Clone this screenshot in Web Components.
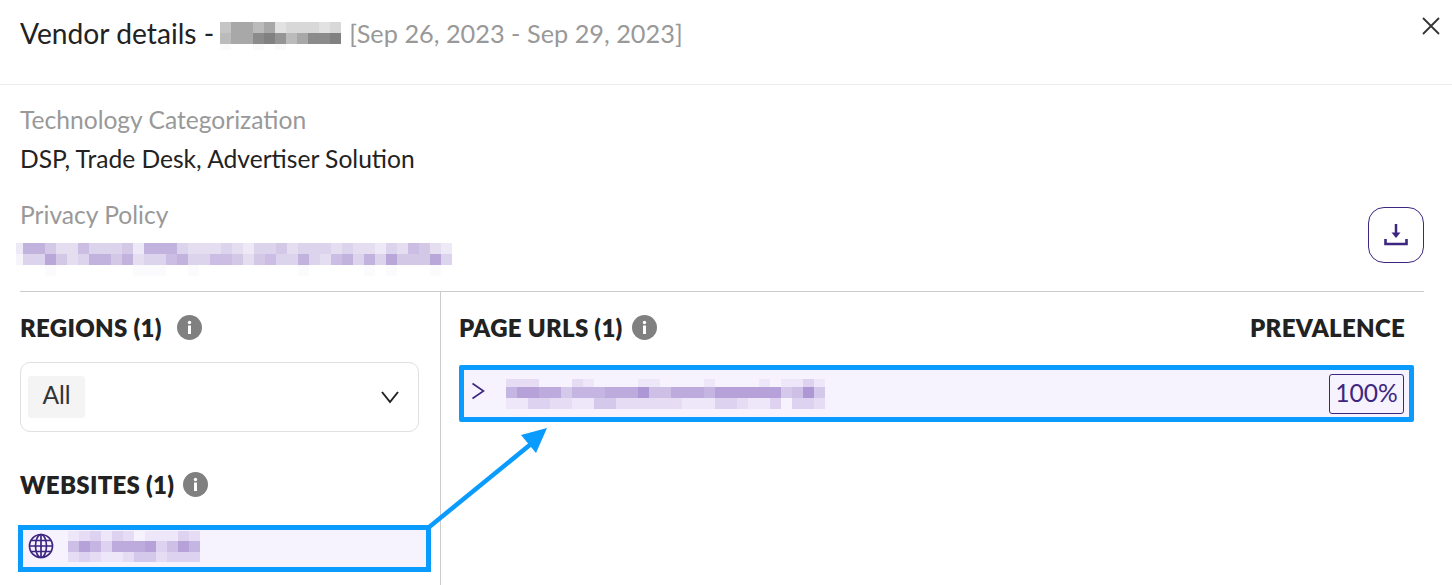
<!DOCTYPE html>
<html lang="en">
  <head>
    <meta charset="UTF-8" />
    <title>Vendor details</title>
    <style>
      body {
        margin: 0;
        background: #fff;
        color: #222;
        font-family: 'Lato', 'Liberation Sans', sans-serif;
        font-size: 24.6px;
      }
    </style>
  </head>
  <body>
    <vendor-dialog>
      <dialog-header slot="header">
        Vendor details -
        <redacted-block
          slot="name"
          color="#6e6e6e"
          heights="11,11,6"
          data="69979344434,799cdb79ccd,.00.0.00000"
        ></redacted-block>
        <span slot="dates">[Sep 26, 2023 - Sep 29, 2023]</span>
      </dialog-header>

      <vendor-summary slot="summary">
        <summary-field label="Technology Categorization">DSP, Trade Desk, Advertiser Solution</summary-field>
        <summary-field label="Privacy Policy" class="policy">
          <redacted-block
            color="#7d5ab8"
            first="6.7"
            heights="11,11,11"
            data="2775336444527774333432445344434332436532,1448534775734467446653564474367474855584,000.0000000...00.000000000.00000.0.000.0"
          ></redacted-block>
        </summary-field>
      </vendor-summary>

      <section-heading slot="left" gap="15">REGIONS (1)</section-heading>
      <region-select slot="left">All</region-select>
      <section-heading slot="left" gap="9" class="websites">WEBSITES (1)</section-heading>
      <website-row slot="left">
        <redacted-block
          color="#7d5ab8"
          heights="10,11,10"
          data="123132011132,586377783586,232112442333"
        ></redacted-block>
      </website-row>

      <section-heading slot="right" gap="9" trailing="PREVALENCE">PAGE URLS (1)</section-heading>
      <url-row slot="right" value="100%">
        <redacted-block
          color="#7d5ab8"
          heights="8,11,11"
          data="22200021000011000010000101131,68877466677795577768888884594,11332211442222221113321130332"
        ></redacted-block>
      </url-row>
    </vendor-dialog>

    <script>
      // small helper, every element below has the same constructor otherwise
      class ShadowElement extends HTMLElement {
        constructor(html) {
          super();
          this.attachShadow({ mode: 'open' }).innerHTML = html;
        }
      }

      const PURPLE = '#3d2680';

      class VendorDialog extends ShadowElement {
        constructor() {
          super(`
            <style>
              :host { display: block; position: relative; width: 1452px; height: 585px; overflow: hidden; }
              .columns { display: grid; grid-template-columns: 421px 1fr; margin-left: 20px; }
              .left { border-right: 1px solid #ccc; height: 293px; box-sizing: border-box; padding: 21px 21px 0 0; }
              .right { padding: 21px 47px 0 18px; }
              svg { position: absolute; left: 0; top: 0; pointer-events: none; }
            </style>
            <slot name="header"></slot>
            <slot name="summary"></slot>
            <div class="columns">
              <div class="left"><slot name="left"></slot></div>
              <div class="right"><slot name="right"></slot></div>
            </div>
            <svg width="1452" height="585" viewBox="0 0 1452 585">
              <path d="M428 528 L531 444" stroke="#0a9bff" stroke-width="4.5" fill="none" />
              <path d="M547 428 L521 435 L536 453 Z" fill="#0a9bff" />
            </svg>
          `);
        }
      }

      class DialogHeader extends ShadowElement {
        constructor() {
          super(`
            <style>
              :host { display: flex; height: 85px; box-sizing: border-box; border-bottom: 1px solid #ebebeb; padding: 18px 11px 0 20px; font-size: 28.2px; color: #222; }
              .title { display: flex; gap: 6px; height: 30px; line-height: 30px; flex: 1; white-space: nowrap; }
              .dates { color: #999; font-size: 25.3px; margin-left: 2px; }
              slot[name=name]::slotted(*) { margin-top: 4px; }
              svg { margin-top: -2px; }
            </style>
            <div class="title">
              <span><slot></slot></span>
              <slot name="name"></slot>
              <span class="dates"><slot name="dates"></slot></span>
            </div>
            <svg width="20" height="20" viewBox="0 0 20 20"><path d="M2 2 L18 18 M18 2 L2 18" stroke="#333" stroke-width="1.8" fill="none" /></svg>
          `);
        }
      }

      class VendorSummary extends ShadowElement {
        constructor() {
          super(`
            <style>
              :host { display: flex; justify-content: space-between; margin: 0 28px 0 20px; padding: 20px 0 15px; border-bottom: 1px solid #ccc; }
              .fields { display: flex; flex-direction: column; gap: 26px; }
              button {
                align-self: flex-end; margin-bottom: 13px; width: 56px; height: 56px; padding: 0; background: #fff;
                border: 1.5px solid ${PURPLE}; border-radius: 16px; display: flex; align-items: center; justify-content: center;
              }
            </style>
            <div class="fields"><slot></slot></div>
            <button>
              <svg width="26" height="26" viewBox="0 0 26 26">
                <path d="M13 2 V12" stroke="${PURPLE}" stroke-width="2.5" fill="none" />
                <path d="M8.5 10.5 H17.5 L13 16 Z" fill="${PURPLE}" />
                <path d="M2.5 17 V22 H23.5 V17" stroke="${PURPLE}" stroke-width="2.6" fill="none" />
              </svg>
            </button>
          `);
        }
      }

      class SummaryField extends ShadowElement {
        constructor() {
          super(`
            <style>
              :host { display: block; line-height: 30px; color: #222; }
              .label { color: #999; margin-bottom: 9px; }
              :host(.policy) .label { margin-bottom: 13px; }
              :host(.policy) .value { margin-left: -4px; }
            </style>
            <div class="label"></div>
            <div class="value"><slot></slot></div>
          `);
        }
        connectedCallback() {
          this.shadowRoot.querySelector('.label').textContent = this.getAttribute('label');
        }
      }

      // pixelated stand-in for text that was blurred out in the screenshot
      // data is one hex digit of opacity per cell, "." is barely visible
      class RedactedBlock extends ShadowElement {
        constructor() {
          super(`
            <style>
              :host { display: block; line-height: 0; filter: blur(0.5px); }
              .row { display: flex; }
              .cell { width: 11px; flex: none; }
            </style>
          `);
        }
        connectedCallback() {
          const color = this.getAttribute('color');
          const first = this.getAttribute('first');
          const heights = this.getAttribute('heights').split(',');
          this.getAttribute('data').split(',').forEach((line, i) => {
            const row = document.createElement('div');
            row.className = 'row';
            [...line].forEach((ch, j) => {
              const cell = document.createElement('div');
              cell.className = 'cell';
              if (first && j === 0) cell.style.width = first + 'px';
              cell.style.height = heights[i] + 'px';
              cell.style.background = color;
              cell.style.opacity = ch === '.' ? 0.03 : parseInt(ch, 16) / 15;
              row.appendChild(cell);
            });
            this.shadowRoot.appendChild(row);
          });
        }
      }

      class InfoDot extends ShadowElement {
        constructor() {
          super(`
            <style>:host { display: inline-flex; }</style>
            <svg width="25" height="25" viewBox="0 0 25 25">
              <circle cx="12.5" cy="12.5" r="12.5" fill="#808080" />
              <circle cx="12.5" cy="7.5" r="1.7" fill="#fff" />
              <rect x="11" y="10.5" width="3" height="8.5" fill="#fff" />
            </svg>
          `);
        }
      }

      class SectionHeading extends ShadowElement {
        constructor() {
          super(`
            <style>
              :host { display: flex; align-items: center; height: 30px; line-height: 30px; font-size: 24px; font-weight: 800; letter-spacing: 0.3px; color: #222; white-space: nowrap; }
              :host(.websites) { margin-top: 38px; }
              .trailing { margin-left: auto; margin-right: 9px; }
              info-dot { margin-top: -2px; }
            </style>
            <span><slot></slot></span>
            <info-dot></info-dot>
            <span class="trailing"></span>
          `);
        }
        connectedCallback() {
          this.shadowRoot.querySelector('info-dot').style.marginLeft = this.getAttribute('gap') + 'px';
          this.shadowRoot.querySelector('.trailing').textContent = this.getAttribute('trailing') || '';
        }
      }

      class RegionSelect extends ShadowElement {
        constructor() {
          super(`
            <style>
              :host { display: flex; align-items: center; justify-content: space-between; box-sizing: border-box; height: 70px; margin-top: 19px; padding: 0 18px 0 7px; border: 1px solid #e0e0e0; border-radius: 10px; }
              .chip { display: flex; align-items: center; justify-content: center; box-sizing: border-box; width: 57px; height: 42px; padding-bottom: 5px; background: #f4f4f4; border-radius: 3px; color: #333; }
            </style>
            <div class="chip"><slot></slot></div>
            <svg width="20" height="14" viewBox="0 0 20 14"><path d="M2 2 L10 12 L18 2" stroke="#222" stroke-width="2" fill="none" /></svg>
          `);
        }
      }

      class WebsiteRow extends ShadowElement {
        constructor() {
          super(`
            <style>
              :host { display: flex; align-items: center; gap: 14px; box-sizing: border-box; width: 413px; height: 47px; margin: 25px 0 0 -2px; padding-left: 5px; border: 5px solid #0a9bff; background: #f6f2fe; }
              svg { margin-top: -6px; }
              ::slotted(redacted-block) { margin-top: -4px; }
            </style>
            <svg width="26" height="26" viewBox="0 0 26 26" fill="none" stroke="${PURPLE}" stroke-width="1.7">
              <circle cx="13" cy="13" r="11.5" />
              <ellipse cx="13" cy="13" rx="5.5" ry="11.5" />
              <path d="M13 1.5 V24.5 M1.5 13 H24.5 M3.2 7.5 H22.8 M3.2 18.5 H22.8" />
            </svg>
            <slot></slot>
          `);
        }
      }

      class UrlRow extends ShadowElement {
        constructor() {
          super(`
            <style>
              :host { display: flex; align-items: center; box-sizing: border-box; width: 955px; height: 57px; margin-top: 22px; padding: 0 5px 0 7px; border: 5px solid #0a9bff; border-radius: 2px; background: #f6f2fe; }
              svg { margin-top: -6px; }
              ::slotted(redacted-block) { margin-left: 21px; }
              .value { margin-left: auto; width: 75px; height: 40px; box-sizing: border-box; border: 1px solid ${PURPLE}; border-radius: 3px; color: ${PURPLE}; line-height: 36px; text-align: center; }
            </style>
            <svg width="14" height="18" viewBox="0 0 14 18"><path d="M1.5 1.5 L12.5 9 L1.5 16.5" stroke="${PURPLE}" stroke-width="1.6" fill="none" /></svg>
            <slot></slot>
            <div class="value"></div>
          `);
        }
        connectedCallback() {
          this.shadowRoot.querySelector('.value').textContent = this.getAttribute('value');
        }
      }

      customElements.define('vendor-dialog', VendorDialog);
      customElements.define('dialog-header', DialogHeader);
      customElements.define('vendor-summary', VendorSummary);
      customElements.define('summary-field', SummaryField);
      customElements.define('redacted-block', RedactedBlock);
      customElements.define('info-dot', InfoDot);
      customElements.define('section-heading', SectionHeading);
      customElements.define('region-select', RegionSelect);
      customElements.define('website-row', WebsiteRow);
      customElements.define('url-row', UrlRow);
    </script>
  </body>
</html>
